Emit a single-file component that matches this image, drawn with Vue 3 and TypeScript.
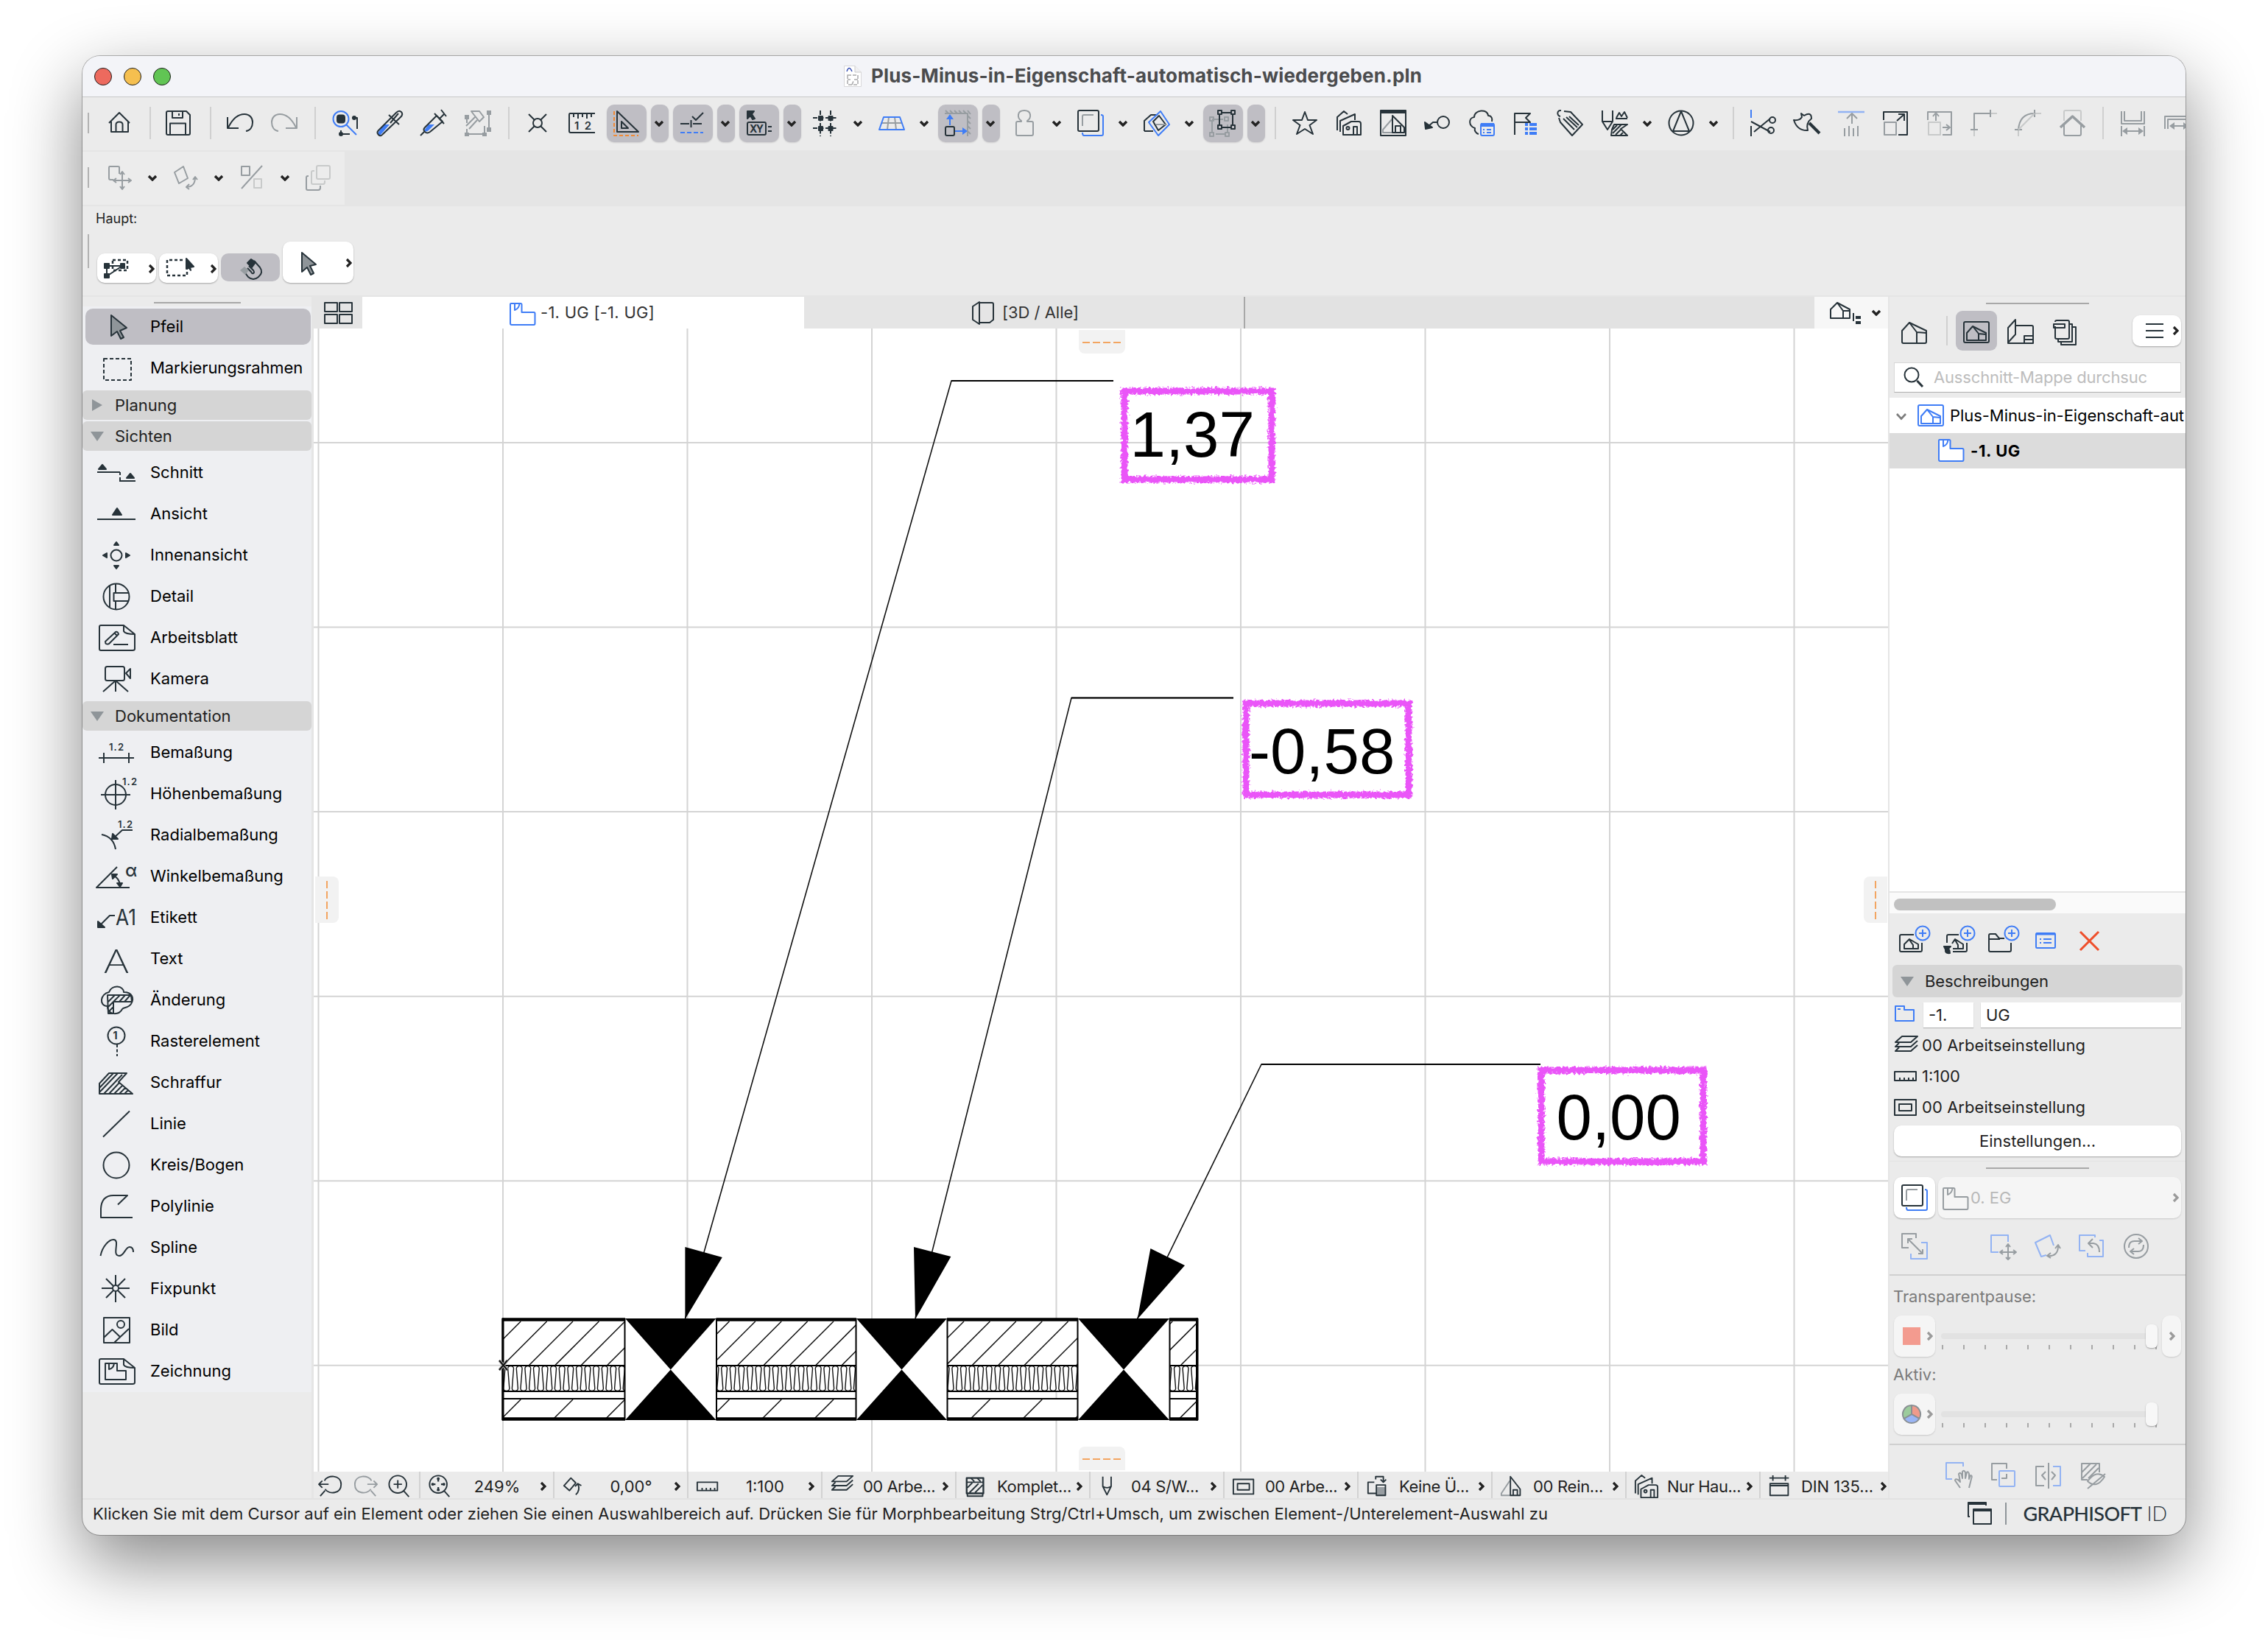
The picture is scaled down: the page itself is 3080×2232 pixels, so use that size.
<script setup lang="ts">
interface Tool { k: 'icon' | 'drop' | 'sep'; n?: string; on?: boolean; w?: number; x?: number; c?: string }

const vFit = {
  mounted(el: HTMLElement, b: { value: number }) {
    const w = el.getBoundingClientRect().width
    const n = (el.textContent || '').length
    if (b.value && n > 1) el.style.letterSpacing = `${(b.value - w) / n}px`
  },
}

const house = '<path d="M1 32V17L11 6 34 17V32Q34 34 32 34H3Q1 34 1 32Z"/><path d="M11 6 21 19V34M21 19 34 20"/>'
const houseIn = '<path d="M5 29V19L13 10 31 19V29Z"/><path d="M13 10 21 20V29M21 20 31 21"/>'
const storey = '<path d="M2 5H15Q16.500 5 16.500 6.500V17H33Q34.500 17 34.500 18.500V32Q34.500 34 33 34H3Q1 34 1 32V6Q1 5 2 5Z"/><path d="M7 5V14Q13 12 13.500 5"/>'
const plus = '<circle class="b" cx="32" cy="9" r="9.500"/><path class="b" d="M32 4V14M27 9H37"/>'
const layers = '<path d="M3 11 12 3H33L24 11ZM8 12 3 17H24L33 9M8 18 3 23H24L33 15"/>'

const icons: Record<string, string> = {
  home: '<path d="M4 18 18 4 32 18M7 16V30H30V16M13.500 30V20Q13.500 16.500 18 16.500T22.500 20V30"/>',
  save: '<path d="M4 2H29L34 7V32Q34 34 32 34H4Q2 34 2 32V4Q2 2 4 2ZM10 2V11H24V2M19 5V8M7 34V18.500H28V34"/>',
  undo: '<path d="M1 10V25H16M2 24C8 12 16 6 24 6C31 6 35 11 35 17C35 23 32 28 26 29"/>',
  redo: '<path class="g" d="M35 10V25H20M34 24C28 12 20 6 12 6C5 6 1 11 1 17C1 23 4 28 10 29"/>',
  find: '<circle class="b" cx="12" cy="12.500" r="10.500"/><path class="b" d="M19 20 33 34"/><rect class="f" x="7" y="7.500" width="10" height="10" rx="3"/><path d="M27 11H34V26M24 33H12V28"/><circle class="f" cx="30" cy="11" r="2"/><circle class="f" cx="12" cy="33" r="2"/>',
  dropper: '<path class="bf" d="M10 20H18L6 34Q3 35 2 32Z"/><path d="M3 28 27 4Q31 0 34 3T33 10L9 33Q6 37 3 34T3 28ZM17 7 31 20M19 18 30 5"/>',
  syringe: '<path class="bf" d="M11 20H19L11 28Q7 31 5 28Z"/><path d="M0 35 5 30M6 24 22 8 30 16 13 30Q9 33 6 30T6 24ZM19 5 32 19M26 12 33 5M28 0 35 9"/>',
  pickel: '<path class="g" d="M33 4V28M3 10V18M3 26V33H27V22M2 22 14 10M6 26 17 14M9 2H20L26 10 20 16 12 6Z"/><path class="gf" d="M30 1h6v6h-6zM30 24h6v6h-6zM0 7h6v6h-6zM0 31h6v5h-6zM24 31h6v5h-6z"/>',
  xcirc: '<circle cx="18" cy="18" r="6"/><path d="M6 6 14 14M30 6 22 14M6 30 14 22M30 30 22 22"/>',
  ruler: '<path d="M36 5H2Q1 5 1 7V29Q1 31 3 31H36M7 5V10M13 5V12M19 5V10M25 5V12M31 5V10"/><text x="8" y="27" font-size="15" font-weight="600" textLength="23">12</text>',
  tri: '<path d="M5 2V30H34ZM11 16V25H20Z"/><path class="o" stroke-dasharray="5 3" d="M1 2V35H34"/>',
  guide: '<path d="M1 19H13M18 19H30M15.500 14V24M17 9 22 14 32 4"/><path class="b" stroke-dasharray="6 3" d="M1 31H32"/>',
  xy: '<path class="f" d="M2 2H11L8 6 12 12 9 13 6 8 2 12Z"/><rect x="2" y="17" width="25" height="17" rx="2"/><path d="M30 23H35M30 29H35"/><text x="5" y="31" font-size="14" font-weight="700" textLength="19">XY</text>',
  grid: '<path stroke-dasharray="6 2.500" d="M1 11H35M1 25H35M11 1V36M25 1V36"/><path class="f" d="M9 9h5v5H9zM22.500 9h5v5h-5zM9 23h5v5H9zM22.500 23h5v5h-5z"/>',
  plane: '<path class="g" d="M14 10 12 27M22 10 24 27M4 18H32"/><path class="b" d="M7 10H29L35 27H1Z"/>',
  snap: '<path class="g" d="M0 5H31V36M1 1 5 5M7 1 11 5M13 1 17 5M19 1 23 5M25 1 29 5M31 1 35 6M31 8 35 12M31 15 35 19M31 22 35 26M31 29 35 33"/><rect x="1" y="23" width="12" height="12" rx="2"/><path class="b" d="M7 21V12M14 29H24"/><path class="bf" d="M2 13 7 6 12 13ZM24 24 31 29 24 34Z"/>',
  weight: '<path class="g" d="M14 15C8 11 8 1 18 1S28 11 22 15V16H28Q30 16 30 18V33Q30 35 28 35H9Q7 35 7 33V18Q7 16 9 16H14Z"/>',
  trace: '<path class="b" d="M32 7Q35 7 35 9V33Q35 35 33 35H9Q7 35 7 31"/><rect x="1" y="1" width="28" height="28" rx="2"/><path class="g" d="M22 7H9Q7 7 7 9V22"/>',
  cutplane: '<path d="M1 29V15L10 7H19M1 29H13"/><path class="b" d="M23 2 35 20 20 35 7 17Z"/><path d="M21 8 30 20 20 28 13 16Z"/><path class="g" d="M17 20H30"/>',
  group: '<path class="g" d="M3 16V31M8 33H20M3 13H18M24 30V20M0 10h5v5H0zM0 31h5v5H0zM21 31h5v5h-5zM20 10h5v5h-5z"/><path d="M13 6V22M31 6V22M16 4H28M16 24H28M11 1h5v5h-5zM29 1h5v5h-5zM11 21h5v5h-5zM29 21h5v5h-5z"/>',
  star: '<path d="M18 3 22 14H34L24.500 21 29 33 18 26 7 33 11.500 21 2 14H14Z"/>',
  houses: '<path d="M2 28V10L11 2 16 6M6 30V15L26 6V14M10 33V22L21 16H31Q34 16 34 19V34H10ZM24 34V23H29V34"/><circle cx="16.500" cy="25" r="2"/>',
  housewin: '<rect x="1" y="2" width="34" height="33"/><path class="f" d="M1 1H35V4H1z"/><path class="g" d="M17 12 4 27V31H17"/><path d="M17 31V8L33 24V31ZM21 31V22H28V31"/>',
  label: '<circle cx="26" cy="17" r="8"/><path d="M18 17H12L5 23"/><path class="f" d="M1 17 11 24 2 26Z"/>',
  cloud: '<path d="M14 33C10 32 8 28 9 25C0 22 0 11 8 10C8 0 26-2 27 8C32 8 33 13 32 16"/><rect class="b" x="17" y="19" width="18" height="16" rx="2"/><path class="bf" d="M17 18H35V23H17z"/><path class="b" d="M20 27H22M25 27H31M20 31H22M25 31H31"/>',
  flag: '<path d="M3 34V5H24L18 11 24 17H3"/><path class="bf" d="M17 18h4v4h-4zM23 18h10v4H23zM17 24h4v4h-4zM23 24h10v4H23zM17 30h4v4h-4zM23 30h10v4H23z"/>',
  tag: '<path d="M3 11 5 17 21 35 35 20 19 3 10 2M6 1C0 0 0 8 5 9M9 12 24 27M13 10 28 24M17 9 30 21"/>',
  pen: '<path d="M1 1V16L8 27 15 16V1M1 16H15M19 12H35M20 11 24 4 27 9 31 3 35 11M17 20H35L26 26 35 35H13L14 27Z"/><path d="M15 32 27 20M19 34 26 27M25 35 29 31M15 27 21 21"/>',
  north: '<circle cx="18" cy="18" r="16.500"/><path d="M18 2 7 29H29Z"/>',
  scissors: '<path class="b" d="M2 0V11"/><path d="M2 22V36M2 16 28 30M6 30 28 12"/><circle cx="31" cy="14" r="4"/><circle cx="29" cy="28" r="4"/>',
  axe: '<path d="M10 5 14 8Q24 2 24 12Q16 18 19 28Q5 29 0 14Q8 15 11 10Z"/><path stroke-width="4" d="M21 18 35 32"/>',
  extend: '<path class="lb" stroke-width="2.500" d="M0 3H36"/><path class="g" d="M19 19V6M12 12 19 5 26 12M9 25V36M15 22V36M21 25V36M27 22V36"/>',
  resize: '<path d="M2 14V3H34V34H22M20 15 29 7M22 6H30V15"/><path class="g" d="M3 17H19V34H3Z"/>',
  stretch: '<path class="g" d="M2 14V3H34V34H22M13 15V6M9 9 13 4 17 9M22 24H31M27 20 32 24 27 28"/><path class="lg" d="M3 17H19V34H3Z"/>',
  corner: '<path class="g" d="M5 27V5H27M0 27H10M27 0V10"/><path class="lg" d="M5 28V36M28 5H36"/>',
  fillet: '<path class="g" d="M5 27C6 14 12 5 27 5M0 27H10M27 0V10"/><path class="lg" d="M5 28V36M28 5H36M5 27 27 5"/>',
  ghouse: '<path class="lg" d="M7 15V3Q7 1 9 1H28Q30 1 30 3V15"/><path class="g" stroke-width="3.500" d="M2 24 18.500 9 35 24"/><path class="g" d="M7 20V33Q7 35 9 35H28Q30 35 30 33V20"/>',
  dim: '<path class="g" d="M3 2V19H34V2M7 2V15H30V2M3 22V36M34 22V36M6 29H31"/><path class="gf" d="M4 29 11 24V34ZM33 29 26 24V34Z"/>',
  dim2: '<path class="g" d="M2 26V9H36M6 26V13H36M9 22H36"/><path class="gf" d="M8 22 15 17V27ZM34 22 27 17V27Z"/>',
  move: '<path class="g" d="M17 13V4Q17 3 15 3H4Q3 3 3 5V19Q3 21 5 21H9M21 11V33M10 22H32M18 14 21 10 24 14M18 30 21 34 24 30M13 19 9 22 13 25M29 19 33 22 29 25"/>',
  rotate: '<path class="g" d="M2 11 14 3 20 19 8 26ZM18 31C25 31 30 27 30 18M27 21 30 17 33 21M22 27 18 31 22 34"/>',
  percent: '<path class="g" d="M3 3H14V15H3ZM31 2 3 33"/><path class="lg" d="M20 20H30V32H20Z"/>',
  stack: '<path class="g" d="M4 16H3Q1 16 1 18V33Q1 35 3 35H17Q20 35 20 32V29"/><path class="lg" d="M12 9H10Q8 9 8 11V25Q8 27 10 27H24Q26 27 26 24V22"/><rect class="lg" x="15" y="2" width="18" height="18" rx="2"/>',
  selA: '<rect x="11" y="6" width="20" height="14" stroke-dasharray="4 3" stroke-width="2.500"/><path d="M3 14V28L24 14Z"/><path class="f" d="M0 11h6v6H0zM22 11h5v6h-5zM0 25h6v5H0z"/>',
  selB: '<path stroke-dasharray="4 3" stroke-width="2.500" d="M22 6H1V27H28V18"/><path class="f" d="M27 4 37 15 32 16 33 20 30 16 27 18Z"/>',
  magnet: '<path d="M7 21 13 29Q20 35 27 29T29 16L21 7M14 14 20 20Q22 23 20 24T17 22L12 17"/><path class="f" d="M12 10 17 5 23 9 18 16Z"/><path class="gf" d="M2 20 8 15 14 20 9 26Z"/>',
  arrow: '<path fill="#8f9599" d="M10 4V30L17 24 22 34 26 32 21 22 29 20Z"/>',
  quads: '<path d="M1 4H18V16H1ZM21 4H38V16H21ZM1 20H18V32H1ZM21 20H38V32H21Z"/>',
  storey, house,
  storeyB: `<g class="b">${storey}</g>`,
  storeyG: `<g class="g">${storey}</g>`,
  cube: '<path d="M4 9 13 3V33L4 27ZM13 4H30Q32 4 32 6V27L27 31H13"/>',
  viewmap: '<g transform="translate(0 -4)"><path d="M1 27V15L10 6 27 15V27Z"/><path d="M10 6 18 17V27M18 17 27 17"/></g><path d="M32 16V27"/><path stroke-width="4" d="M35 22H42M35 29H42"/>',
  housebox: `<rect x="1" y="4" width="34" height="28" rx="2"/>${houseIn}`,
  houseboxB: `<g class="b"><rect x="1" y="4" width="34" height="28" rx="2"/>${houseIn}</g>`,
  layout: '<path d="M1 29V13L11 2V22L1 33ZM11 10H33Q35 10 35 12V34H1V29M35 24H23V34M23 29H35"/>',
  publish: '<path d="M3 11V26Q3 28 5 28H20Q22 28 22 26V5Q22 3 20 3H5Q3 3 3 5M1 8H16V13H1ZM7 28V32H26V8H22M11 32V36H31V12H26"/>',
  lens: '<circle cx="13" cy="14" r="9.500"/><path stroke-width="3" d="M20.500 22 28 30"/>',
  addHouse: `<path d="M20 11H3Q1 11 1 13V32Q1 34 3 34H29Q31 34 31 32V22"/><path d="M7 30V24L14 17 26 24V30ZM14 18 19 25V30"/>${plus}`,
  addLink: `<path d="M20 11H6Q4 11 4 13V22M12 34H29Q31 34 31 32V22"/><path d="M11 23 15 17 26 24V30H12M15 18 19 25V30"/><path class="f" d="M0 27H9L6 30Q8 32 8 36Q1 37 2 31Z"/>${plus}`,
  addFolder: `<path d="M31 22V32Q31 34 29 34H3Q1 34 1 32V12Q1 10 3 10H10L15 16H22M1 17H16"/>${plus}`,
  list: '<rect class="b" x="4" y="9" width="26" height="20" rx="1.500"/><path class="b" stroke-width="3" d="M4 10H30"/><path class="b" d="M9 17H11M14 17H25M9 22H11M14 22H25"/>',
  cross: '<path class="r" stroke-width="3" d="M4 7 29 32M29 7 4 32"/>',
  lay: layers,
  scale: '<rect x="2" y="12" width="29" height="12"/><path d="M9 24V20M15 24V20M21 24V20M27 24V20"/>',
  frame: '<rect x="2" y="8" width="29" height="21"/><rect x="8" y="14" width="17" height="9"/>',
  folder: '<path class="b" d="M2 8H14V13H27V28H2ZM5 12H9"/>',
  swapT: '<path class="g" d="M20 7V1H1V20H10M10 9 28 27M9 14V8H15M29 22V28H23"/><path class="lb" d="M27 13H35V35H13V28"/>',
  moveT: '<path class="lb" d="M24 12V3H1V26H11"/><path class="g" d="M24 16V36M13 26H34M21 19 24 15 27 19M21 33 24 36 27 33M17 23 13 26 17 29M31 23 35 26 31 29"/>',
  rotT: '<path class="lb" d="M26 17 21 3 1 13 9 32 16 30"/><path class="g" d="M18 31C27 32 32 27 32 18M28 21 32 16 35 21M22 27 17 31 22 34"/>',
  backT: '<path class="lb" d="M22 6V3H1V24H9M28 10H33V32H12V27"/><path class="g" d="M13 14H20Q28 15 28 26M19 8 13 14 19 20"/>',
  cycle: '<circle class="g" cx="18" cy="18" r="16"/><path class="g" d="M8 20Q8 10 17 11H25M21 7 26 11 21 15M28 16Q28 26 19 25H11M15 21 10 25 15 29"/>',
  hand: '<path class="lb" d="M24 6V1H1V23H9"/><path class="g" d="M20 35 13 25Q13 22 17 24L20 27 18 16Q20 13 22 17L23 22V13Q25 10 27 14V22L29 14Q31 12 32 16V23L34 18Q37 18 35 23 L32 35"/>',
  two: '<path class="g" d="M22 9V2H2V24H9M22 16V22H15"/><rect class="lb" x="12" y="12" width="21" height="21" rx="1"/>',
  split: '<path class="g" d="M12 6H1V32H12M18 1V36M14 13 9 18 14 24"/><path class="g" d="M22 13 27 18 22 24"/><path class="lb" d="M24 6H34V32H24"/>',
  hatchOff: '<path class="g" d="M10 24H2V2H26V14M2 14 14 2M3 22 22 3M11 22 25 8M10 26Q22 10 33 20Q22 37 10 26ZM10 36 34 16"/>',
  zback: '<path d="M8 10C12 1 32 1 32 15S15 30 9 22M0 15H14M5 10 0 15 5 20M9 24 2 32"/>',
  zfwd: '<path class="g" d="M26 10C22 1 2 1 2 15S19 30 25 22M20 15H34M29 10 34 15 29 20M25 24 32 32"/>',
  zin: '<circle cx="14" cy="15" r="12.500"/><path d="M14 9V21M8 15H20M22 24 30 33"/>',
  zfit: '<circle cx="15" cy="15" r="12.500"/><path stroke-width="2.500" d="M15 5V11M15 19V25M5 15H11M19 15H25M13 7H17M13 23H17M7 13V17M23 13V17"/><path d="M23 24 31 33"/>',
  rot: '<path d="M3 17 13 6 20 13 11 24ZM20 30Q27 24 23 14M19 18 23 14 28 17"/>',
  wallhatch: '<path stroke-width="2.500" d="M4 6H28V28H4Z"/><path d="M4 12H28M5 28V32H27V28M5 20 12 13M8 27 21 14M16 27 27 16M10 6 15 11M19 6 24 11"/>',
  pen2: '<path d="M7 4V18L13 30 19 18V4M7 18Q13 22 19 18"/>',
  over: '<path d="M12 12H3V28H15M14 8V4H25V11M21 8 25 12 29 8"/><rect class="gf" x="16" y="19" width="12" height="12"/><path d="M15 16H28V31H15Z"/>',
  reno: '<path class="g" d="M14 10 2 28V31H15"/><path d="M15 31V4L29 22V31ZM19 31V23H25V31"/>',
  dimstd: '<path d="M2 6H30M7 2V10M25 2V10M3 14H29V31H3ZM3 17H29"/>',
  windows: '<path d="M4 22H2V3H26V7M2 5H26"/><path d="M9 12H33V32H9ZM9 14H33"/>',
}

const sep = (w: number, x: number): Tool => ({ k: 'sep', w, x })
const ic = (n: string): Tool => ({ k: 'icon', n })
const dr = (n: string, on = false): Tool => ({ k: 'drop', n, on })
const tools: Tool[] = [
  ic('home'), sep(20, 11), ic('save'), sep(24, 13), ic('undo'), ic('redo'), sep(23, 11),
  ic('find'), ic('dropper'), ic('syringe'), ic('pickel'), sep(21, 11), ic('xcirc'), ic('ruler'), sep(4, -9),
  dr('tri', true), dr('guide', true), dr('xy', true), dr('grid'), dr('plane'), dr('snap', true), dr('weight'), dr('trace'), dr('cutplane'), dr('group', true),
  sep(18, 7), ic('star'), ic('houses'), ic('housewin'), ic('label'), ic('cloud'), ic('flag'), ic('tag'), sep(4, -9),
  dr('pen'), dr('north'), sep(18, 7),
  ic('scissors'), ic('axe'), ic('extend'), ic('resize'), ic('stretch'), ic('corner'), ic('fillet'), ic('ghouse'), sep(22, 11), ic('dim'), ic('dim2'),
]

const sheet = '<path d="M7 3H38L53 15V35Q53 37 50 37H7Q5 37 5 35V5Q5 3 7 3ZM38 3V11Q40 15 53 15"/>'
const views = [
  { t: 'Schnitt', i: '<path class="f" d="M4 15 9 9 14 15ZM42 27 47 21 52 27Z"/><path d="M2 19H33M32 31H54"/><path stroke-dasharray="4 3" d="M33 19V31"/>' },
  { t: 'Ansicht', i: '<path class="f" d="M23 21 29 12 35 21Z"/><path d="M2 27H54"/>' },
  { t: 'Innenansicht', i: '<circle cx="28" cy="20" r="7.500"/><path class="f" d="M25 6 28 2 31 6ZM25 34 28 38 31 34ZM15 17 10 20 15 23ZM41 17 46 20 41 23Z"/>' },
  { t: 'Detail', i: '<circle cx="28" cy="20" r="17.500"/><path d="M19 5V35M27 3V15M27 26V37M45 15H24.500V26H45"/>' },
  { t: 'Arbeitsblatt', i: sheet + '<path d="M13 25 27 12Q30 11 31 15L18 28Q13 30 13 25ZM24 29H44M25 13 29 17"/>' },
  { t: 'Kamera', i: '<rect x="13" y="3" width="26" height="19" rx="2.500"/><path d="M41 12 47 6V19ZM10 37 27 22 44 37M27 22V37"/>' },
]
const docs = [
  { t: 'Bemaßung', i: '<text x="18" y="17" font-size="13" font-weight="600" textLength="20">1.2</text><path d="M4 27H52M11 20V34M45 20V34"/>' },
  { t: 'Höhenbemaßung', i: '<circle cx="27" cy="21" r="14"/><path d="M7 21H47M27 1V41"/><text x="36" y="8" font-size="13" font-weight="600" textLength="20">1.2</text>' },
  { t: 'Radialbemaßung', i: '<text x="30" y="10" font-size="13" font-weight="600" textLength="20">1.2</text><path d="M50 13H36L24 24M8 19Q24 22 27 39"/><path class="f" d="M23 18 30 25 22 25Z"/>' },
  { t: 'Winkelbemaßung', i: '<path d="M29 7 1 35H46M24 19Q32 22 33 32"/><path class="f" d="M22 17H29L23 23ZM29 29H36L33 34Z"/><text x="40" y="20" font-size="24" font-weight="500">α</text>' },
  { t: 'Etikett', i: '<path d="M6 30 19 17H26"/><path class="f" d="M3 25 12 33H3Z"/><text x="27" y="30" font-size="30" font-weight="400" textLength="28" lengthAdjust="spacingAndGlyphs">A1</text>' },
  { t: 'Text', i: '<text x="11" y="38.500" font-size="46" class="thin" textLength="34" lengthAdjust="spacingAndGlyphs">A</text>' },
  { t: 'Änderung', i: '<path d="M16 28C4 28 6 11 18 9C22-2 38 0 38 9C49 9 53 17 48 25C44 31 38 29 36 32C32 40 18 41 16 30Z"/><path d="M16 13H48L49 22H24V38H17ZM17 22 26 13M17 29 33 13M17 36 24 29M32 22 40 13M39 22 47 13"/>' },
  { t: 'Rasterelement', i: '<circle cx="28" cy="12" r="11.500"/><text x="23.500" y="17" font-size="14" font-weight="700">1</text><path stroke-dasharray="4 2.500" d="M29 24V40"/>' },
  { t: 'Schraffur', i: '<path d="M5 21 18 7H42L31 19 50 35H5ZM5 27 24 7M5 33 30 7M11 35 36 9M18 35 32 20M25 35 36 24M32 35 40 27M39 35 44 30"/>' },
  { t: 'Linie', i: '<path d="M10 37.500 46 2.500"/>' },
  { t: 'Kreis/Bogen', i: '<circle cx="28" cy="20" r="17.500"/>' },
  { t: 'Polylinie', i: '<path d="M50 35H7V23Q8 5 24 5H43L30 17.500"/>' },
  { t: 'Spline', i: '<path d="M6.500 31C9 18 18 9 24 9C34 9 21 31 32 31C39 31 40 19 46 19C50 19 51 22 51 26"/>' },
  { t: 'Fixpunkt', i: '<circle cx="27" cy="19" r="4"/><path d="M8 19H23M31 19H46M27 1V15M27 23V38M14 6 24 16M30 22 40 32M40 6 30 16M24 22 14 32"/>' },
  { t: 'Bild', i: '<rect x="11" y="3" width="35" height="34"/><circle cx="34" cy="12" r="5"/><path d="M11 30 22.500 19 33 29M25 37 45 18"/>' },
  { t: 'Zeichnung', i: sheet + '<path d="M13 9H29V19H41V31H13ZM18 9V17Q24 16 25 9"/>' },
]

const vlines = Array.from({ length: 9 }, (_, i) => 432.5 + i * 250.5 - 426)
const hlines = Array.from({ length: 6 }, (_, i) => 601 + i * 250.55 - 446)

const segs = [[682, 849], [972.5, 1163], [1286, 1464], [1588, 1627]]
const cols = [[849, 972.5], [1163, 1286], [1464, 1588]]
const hatchTop = Array.from({ length: 30 }, (_, i) => 707.2 - 35.4 + i * 35.4)
const hatchBot = Array.from({ length: 16 }, (_, i) => 707.2 + i * 70.8)
const p = 11.6
const coil = Array.from({ length: 84 }, (_, k) => {
  const x = 682 + k * p
  return `M${x - 1.800} 1885L${x - 3.900} 1858A3.900 3.500 0 0 1 ${x + 3.900} 1858L${x + 1.800} 1885A4 3.500 0 0 0 ${x + p - 1.800} 1885`
}).join('')

const notes = [
  { t: '1,37', x: 1534.5, y: 620, b: [1527, 531, 200, 120] },
  { t: '-0,58', x: 1696, y: 1050, b: [1692, 955, 221, 124] },
  { t: '0,00', x: 2113.5, y: 1547, b: [2093, 1453, 220, 124] },
]

const opts = [
  { i: 'zfit', t: '249%', c: true }, { i: 'rot', t: '0,00°', c: true }, { i: 'scale', t: '1:100', c: true },
  { i: 'lay', t: '00 Arbe...' }, { i: 'wallhatch', t: 'Komplet...' }, { i: 'pen2', t: '04 S/W...' }, { i: 'frame', t: '00 Arbe...' },
  { i: 'over', t: 'Keine Ü...' }, { i: 'reno', t: '00 Rein...' }, { i: 'houses', t: 'Nur Hau...' }, { i: 'dimstd', t: 'DIN 135...' },
]
const optW: Record<string, number> = { '00 Arbe...': 98, 'Komplet...': 101, '04 S/W...': 92, 'Keine Ü...': 95, '00 Rein...': 95, 'Nur Hau...': 100, 'DIN 135...': 98 }
</script>

<template>
  <div class="desk">
    <div class="win">
      <header class="title">
        <div class="lights"><i class="red" /><i class="yel" /><i class="grn" /></div>
        <svg class="doc" viewBox="0 0 24 29"><path d="M.5.500H15L23.500 9V28.500H.5Z" fill="#fff" stroke="#d8d8da" /><path d="M15 .5V9H23.500" fill="#f0f0f2" stroke="#ccc" /><path d="M4 8Q7-1 11 8" fill="none" stroke="#3b52b5" stroke-width="1.500" /><path d="M5 13H19V26H5ZM5 19H9M14 19H19M11 26 13 21" fill="none" stroke="#a9a9ab" stroke-width="1.500" stroke-dasharray="5 2" /></svg>
        <span class="name"><b v-fit="748">Plus-Minus-in-Eigenschaft-automatisch-wiedergeben.pln</b></span>
      </header>

      <div class="bar">
        <span class="grip" />
        <template v-for="(t, i) in tools" :key="i">
          <span v-if="t.k === 'sep'" class="sep" :style="{ width: t.w + 'px' }"><i v-if="t.x! > 0" :style="{ marginLeft: t.x + 'px' }" /></span>
          <span v-else-if="t.k === 'icon'" class="cell"><svg class="ico" viewBox="0 0 36 36" v-html="icons[t.n!]" /></span>
          <span v-else class="pair" :class="{ on: t.on }">
            <span class="main"><svg class="ico" viewBox="0 0 36 36" v-html="icons[t.n!]" /></span>
            <span class="arr"><svg class="chd" viewBox="0 0 14 9"><path d="M2 2 7 7 12 2" /></svg></span>
          </span>
        </template>
      </div>

      <div class="bar2">
        <div class="b2in">
          <span class="grip" />
          <span v-for="n in ['move', 'rotate', 'percent']" :key="n" class="pair">
            <span class="main"><svg class="ico" viewBox="0 0 36 36" v-html="icons[n]" /></span>
            <span class="arr"><svg class="chd" viewBox="0 0 14 9"><path d="M2 2 7 7 12 2" /></svg></span>
          </span>
          <span class="pair"><span class="main"><svg class="ico" viewBox="0 0 36 36" v-html="icons.stack" /></span></span>
        </div>
      </div>

      <div class="info">
        <div class="haupt">Haupt:</div>
        <div class="ibtns">
          <span class="grip tall" />
          <span class="ib"><svg class="ico" viewBox="0 0 36 36" v-html="icons.selA" /><svg class="chr" viewBox="0 0 9 14"><path d="M2 2 7 7 2 12" /></svg></span>
          <span class="ib"><svg class="ico" viewBox="0 0 36 36" v-html="icons.selB" /><svg class="chr" viewBox="0 0 9 14"><path d="M2 2 7 7 2 12" /></svg></span>
          <span class="ib sel"><svg class="ico" viewBox="0 0 36 36" v-html="icons.magnet" /></span>
          <span class="ib big"><svg class="ico" viewBox="0 0 36 36" v-html="icons.arrow" /><svg class="chr" viewBox="0 0 9 14"><path d="M2 2 7 7 2 12" /></svg></span>
        </div>
      </div>

      <div class="body">
        <aside class="left">
          <div class="lgrip"><i /></div>
          <div class="tools">
            <div class="tool act"><svg class="tic ico" viewBox="0 0 56 40"><path fill="#8f9599" d="M21 4V32L29 26 34 36 38 34 33 25 42 21Z" /></svg><span>Pfeil</span></div>
            <div class="tool"><svg class="tic ico" viewBox="0 0 56 40"><rect x="11" y="7" width="37" height="29" stroke-dasharray="5 3" /></svg><span v-fit="207">Markierungsrahmen</span></div>
            <div class="head first"><svg class="tr" viewBox="0 0 18 18"><path d="M2 1 16 9 2 17Z" /></svg>Planung</div>
            <div class="head"><svg class="tr" viewBox="0 0 18 18"><path d="M0 3H18L9 16Z" /></svg>Sichten</div>
            <div v-for="t in views" :key="t.t" class="tool"><svg class="tic ico" viewBox="0 0 56 40" v-html="t.i" /><span>{{ t.t }}</span></div>
            <div class="head"><svg class="tr" viewBox="0 0 18 18"><path d="M0 3H18L9 16Z" /></svg>Dokumentation</div>
            <div v-for="t in docs" :key="t.t" class="tool"><svg class="tic ico" viewBox="0 0 56 40" v-html="t.i" /><span>{{ t.t }}</span></div>
          </div>
        </aside>

        <main class="mid">
          <div class="tabs">
            <span class="t0"><svg class="ico q" viewBox="0 0 39 36" v-html="icons.quads" /></span>
            <span class="t1"><svg class="ico" viewBox="0 0 36 36" v-html="icons.storeyB" /><span v-fit="155" class="tt">-1. UG [-1. UG]</span></span>
            <span class="t2"><svg class="ico" viewBox="0 0 36 36" v-html="icons.cube" /><span v-fit="104" class="tt">[3D / Alle]</span></span>
            <span class="t3" />
            <span class="t4"><svg class="ico vm" viewBox="0 0 44 36" v-html="icons.viewmap" /><svg class="chd" viewBox="0 0 14 9"><path d="M2 2 7 7 12 2" /></svg></span>
          </div>
          <div class="canvas">
            <svg class="plan" viewBox="426 446 2138 1552">
              <defs>
                <filter id="rough" x="-5%" y="-8%" width="110%" height="116%"><feTurbulence type="fractalNoise" baseFrequency=".3" numOctaves="2" seed="4" /><feDisplacementMap in="SourceGraphic" scale="8" xChannelSelector="R" yChannelSelector="G" /></filter>
                <clipPath id="cTop"><rect v-for="s in segs" :key="s[0]" :x="s[0]" y="1790" :width="s[1] - s[0]" height="64" /></clipPath>
                <clipPath id="cMid"><rect v-for="s in segs" :key="s[0]" :x="s[0]" y="1854" :width="s[1] - s[0]" height="35" /></clipPath>
                <clipPath id="cBot"><rect v-for="s in segs" :key="s[0]" :x="s[0]" y="1899" :width="s[1] - s[0]" height="27" /></clipPath>
              </defs>
              <g stroke="#d4d4d4" stroke-width="2">
                <path v-for="x in vlines" :key="x" :d="`M${x + 426} 446V1998`" />
                <path v-for="y in hlines" :key="y" :d="`M426 ${y + 446}H2564`" />
              </g>
              <g fill="#fff">
                <rect v-for="s in segs" :key="s[0]" :x="s[0]" y="1790" :width="s[1] - s[0]" height="99" />
                <rect v-for="s in segs" :key="s[1]" :x="s[0]" y="1899" :width="s[1] - s[0]" height="29" />
                <rect v-for="c in cols" :key="c[0]" :x="c[0]" y="1791" :width="c[1] - c[0]" height="136" />
              </g>
              <g stroke="#111" stroke-width="1.500" fill="none">
                <g clip-path="url(#cTop)"><path v-for="x in hatchTop" :key="x" :d="`M${x} 1794L${x - 60} 1854`" /></g>
                <g clip-path="url(#cMid)"><path :d="coil" stroke-width="1.400" /></g>
                <g clip-path="url(#cBot)"><path v-for="x in hatchBot" :key="x" :d="`M${x} 1900L${x - 28} 1928`" /></g>
              </g>
              <g stroke="#000" fill="none">
                <template v-for="s in segs" :key="s[0]">
                  <path stroke-width="2" :d="`M${s[0]} 1854H${s[1]}M${s[0]} 1889H${s[1]}M${s[0]} 1899H${s[1]}M${s[0] + .5} 1790V1928M${s[1] - .5} 1790V1928`" />
                  <path stroke-width="4.500" :d="`M${s[0]} 1791.500H${s[1]}M${s[0]} 1926.500H${s[1]}`" />
                </template>
                <path stroke-width="3" d="M683 1789.500V1928.500M1625.500 1789.500V1928.500" />
              </g>
              <path v-for="c in cols" :key="c[0]" :d="`M${c[0]} 1790H${c[1]}L${(c[0] + c[1]) / 2} 1859.500ZM${c[0]} 1928H${c[1]}L${(c[0] + c[1]) / 2} 1859.500Z`" />
              <path d="M678 1847 689 1860M689 1847 678 1860" stroke="#bbb" stroke-width="4" />
              <path d="M678 1847 689 1860M689 1847 678 1860" stroke="#111" stroke-width="2" />
              <g fill="none" stroke="#111" stroke-width="1.600">
                <path d="M1512 517H1292L930.500 1790M1675 947.500H1455L1243 1790M2092 1445H1713L1544.600 1790" />
              </g>
              <g fill="none" stroke="#000" stroke-width="2"><path d="M1512 517H1292M1675 947.500H1455M2092 1445H1713" /></g>
              <path d="M930.400 1693 980.800 1707 930.400 1791ZM1241 1693 1291.400 1706 1243 1791ZM1562.400 1695 1609 1718 1544.600 1791Z" />
              <template v-for="n in notes" :key="n.t">
                <rect :x="n.b[0]" :y="n.b[1]" :width="n.b[2]" :height="n.b[3]" fill="none" stroke="#ea54f8" stroke-width="9" filter="url(#rough)" />
                <text :x="n.x" :y="n.y" font-size="87" font-family="Liberation Sans, Arial, sans-serif">{{ n.t }}</text>
              </template>
            </svg>
            <i class="hd top" /><i class="hd bot" /><i class="hd lft" /><i class="hd rgt" />
          </div>
          <div class="qopt">
            <span class="zooms"><svg v-for="n in ['zback', 'zfwd', 'zin']" :key="n" class="ico" viewBox="0 0 36 36" v-html="icons[n]" /></span>
            <span v-for="(o, i) in opts" :key="i" class="qo">
              <svg class="ico" viewBox="0 0 36 36" v-html="icons[o.i]" />
              <span class="qt" :class="{ c: o.c }"><span v-fit="optW[o.t] || 0">{{ o.t }}</span></span>
              <svg class="chr" viewBox="0 0 9 14"><path d="M2 2 7 7 2 12" /></svg>
            </span>
          </div>
        </main>

        <aside class="right">
          <div class="rgrip"><i /></div>
          <div class="nav">
            <span class="n1"><svg class="ico" viewBox="0 0 36 36" v-html="icons.house" /></span>
            <i class="nsep" />
            <span class="n2"><svg class="ico" viewBox="0 0 36 36" v-html="icons.housebox" /></span>
            <svg class="ico n3" viewBox="0 0 36 36" v-html="icons.layout" />
            <svg class="ico n4" viewBox="0 0 36 36" v-html="icons.publish" />
            <span class="menu"><svg class="ico" viewBox="0 0 36 36"><path d="M6 9H30M6 18H30M6 27H30" /></svg><svg class="chr" viewBox="0 0 9 14"><path d="M2 2 7 7 2 12" /></svg></span>
          </div>
          <div class="search"><svg class="ico" viewBox="0 0 36 36" v-html="icons.lens" /><span class="ph"><span v-fit="290">Ausschnitt-Mappe durchsuc</span></span></div>
          <div class="tree">
            <div class="row"><svg class="tch" viewBox="0 0 16 11"><path d="M2 2 8 8.500 14 2" /></svg><svg class="ico" viewBox="0 0 36 36" v-html="icons.houseboxB" /><span v-fit="318">Plus-Minus-in-Eigenschaft-aut</span></div>
            <div class="row sel"><svg class="ico" viewBox="0 0 36 36" v-html="icons.storeyB.replace('<path', '<path fill=\'#fff\'')" /><b v-fit="68">-1. UG</b></div>
          </div>
          <div class="hs"><i /></div>
          <div class="acts">
            <svg v-for="n in ['addHouse', 'addLink', 'addFolder', 'list', 'cross']" :key="n" class="ico" viewBox="0 0 36 36" v-html="icons[n]" />
          </div>
          <div class="head desc"><svg class="tr" viewBox="0 0 18 18"><path d="M0 3H18L9 16Z" /></svg><span v-fit="168">Beschreibungen</span></div>
          <div class="ug"><svg class="ico" viewBox="0 0 36 36" v-html="icons.folder" /><span class="f1">-1.</span><span class="f2">UG</span></div>
          <div class="set"><svg class="ico" viewBox="0 0 36 30" v-html="icons.lay" /><span v-fit="222">00 Arbeitseinstellung</span></div>
          <div class="set"><svg class="ico" viewBox="0 0 36 36" v-html="icons.scale" />1:100</div>
          <div class="set"><svg class="ico" viewBox="0 0 36 36" v-html="icons.frame" /><span v-fit="222">00 Arbeitseinstellung</span></div>
          <div class="ebtn"><span v-fit="158">Einstellungen...</span></div>
          <div class="rgrip2"><i /></div>
          <div class="ref">
            <span class="rb"><svg class="ico" viewBox="0 0 36 36" v-html="icons.trace" /></span>
            <span class="cb"><svg class="ico" viewBox="0 0 36 36" v-html="icons.storeyG" /><span>0. EG</span><svg class="chr dim" viewBox="0 0 9 14"><path d="M2 2 7 7 2 12" /></svg></span>
          </div>
          <div class="refi">
            <svg class="ico" viewBox="0 0 36 36" v-html="icons.swapT" /><svg v-for="n in ['moveT', 'rotT', 'backT', 'cycle']" :key="n" class="ico" viewBox="0 0 36 36" v-html="icons[n]" />
          </div>
          <div class="tp">
            <div class="lb2"><span v-fit="194">Transparentpause:</span></div>
            <div class="sl">
              <span class="sb"><i class="sw" /><svg class="chr dim" viewBox="0 0 9 14"><path d="M2 2 7 7 2 12" /></svg></span>
              <span class="track"><span class="ticks"><i v-for="k in 11" :key="k" /></span><i class="thumb" /></span>
              <span class="sb sm"><svg class="chr dim" viewBox="0 0 9 14"><path d="M2 2 7 7 2 12" /></svg></span>
            </div>
            <div class="lb2 ak">Aktiv:</div>
            <div class="sl">
              <span class="sb"><svg class="pie" viewBox="0 0 28 28"><g stroke="#8a9094" stroke-width="2"><path fill="#ef9a8b" d="M14 14V2A12 12 0 0 1 24.400 20Z" /><path fill="#9ab5f5" d="M14 14 24.400 20A12 12 0 0 1 3.600 20Z" /><path fill="#9ccb9c" d="M14 14 3.600 20A12 12 0 0 1 14 2Z" /></g></svg><svg class="chr dim" viewBox="0 0 9 14"><path d="M2 2 7 7 2 12" /></svg></span>
              <span class="track"><span class="ticks"><i v-for="k in 11" :key="k" /></span><i class="thumb" /></span>
            </div>
          </div>
          <div class="lasti"><svg v-for="n in ['hand', 'two', 'split', 'hatchOff']" :key="n" class="ico" viewBox="0 0 36 36" v-html="icons[n]" /></div>
        </aside>
      </div>

      <footer class="status">
        <span v-fit="1976" class="msg">Klicken Sie mit dem Cursor auf ein Element oder ziehen Sie einen Auswahlbereich auf. Drücken Sie für Morphbearbeitung Strg/Ctrl+Umsch, um zwischen Element-/Unterelement-Auswahl zu</span>
        <svg class="ico" viewBox="0 0 36 36" v-html="icons.windows" /><i class="fsep" />
        <span class="gs"><span v-fit="161">GRAPHISOFT</span><em>ID</em></span>
      </footer>
    </div>
  </div>
</template>

<style>
html, body { margin: 0; background: #fff; }
.ico { width: 36px; height: 36px; flex: none; fill: none; stroke: #27333a; stroke-width: 2; overflow: visible; stroke-linejoin: round; }
.ico .b, .ico .b * { stroke: #3f7df6; }
.ico .lb { stroke: #93b3f3; }
.ico .bf { fill: #3f7df6; stroke: none; }
.ico .g, .ico .g * { stroke: #979da1; }
.ico .lg { stroke: #c8caca; }
.ico .gf { fill: #979da1; stroke: none; }
.ico .f { fill: #27333a; }
.ico .o { stroke: #f08a35; }
.ico .r { stroke: #ee4f2b; }
.ico text { fill: #27333a; stroke: none; font-family: Inter, "Open Sans", sans-serif; }
.ico text.thin { font-family: Lato, sans-serif; font-weight: 300; }
</style>

<style scoped>
.desk { width: 3080px; height: 2232px; box-sizing: border-box; padding: 76px 112px 148px; background: #fff; overflow: hidden; font: 22px/28px Inter, "Open Sans", sans-serif; color: #1f1f1f; }
.win { width: 2856px; height: 2008px; border-radius: 24px; overflow: hidden; display: flex; flex-direction: column; background: #ebebeb; box-shadow: 0 0 0 1px rgba(0,0,0,.28), 0 36px 96px rgba(0,0,0,.48); }
span, i, b { white-space: nowrap; }
i { display: block; font-style: normal; }
svg { display: block; flex: none; }
.chd { width: 14px; height: 9px; fill: none; stroke: #222; stroke-width: 3.400; }
.chr { width: 9px; height: 14px; fill: none; stroke: #222; stroke-width: 3.200; }
.chr.dim { stroke: #9a9a9a; }

.title { height: 56px; flex: none; background: #f3f4f8; border-bottom: 1px solid #c8c8c8; box-sizing: border-box; display: flex; align-items: center; }
.lights { display: flex; gap: 16px; margin-left: 16px; width: 1018px; }
.lights i { width: 22px; height: 22px; border-radius: 50%; border: 1px solid; }
.red { background: #ed6a5e; border-color: #d95246; }
.yel { background: #f5bf4f; border-color: #dfa63a; }
.grn { background: #61c554; border-color: #4fab41; }
.doc { width: 24px; height: 29px; }
.name { margin: 0 0 2px 13px; width: 760px; font-size: 26px; color: #4b4c4e; }
.name b { display: inline-block; font-weight: 700; }

.bar { height: 74px; flex: none; display: flex; align-items: center; box-sizing: border-box; padding-bottom: 2px; border-bottom: 2px solid #e5e5e5; }
.grip { width: 2px; height: 28px; background: #b2b2b2; margin: 0 11px 0 7px; flex: none; }
.sep { height: 44px; flex: none; display: flex; }
.sep i { width: 2px; height: 44px; background: #d0d0d0; }
.cell { width: 60px; flex: none; display: flex; justify-content: center; }
.pair { width: 90px; flex: none; display: flex; gap: 6px; }
.main { width: 54px; height: 51px; border-radius: 10px; display: flex; align-items: center; justify-content: center; }
.arr { width: 24px; height: 51px; border-radius: 9px; display: flex; align-items: center; justify-content: center; padding-right: 2px; box-sizing: border-box; }
.on .main, .on .arr { background: #bfbec4; box-shadow: 0 1px 2px rgba(0,0,0,.12); }

.bar2 { height: 74px; flex: none; background: #e5e5e5; }
.b2in { width: 356px; height: 72px; background: #ececec; display: flex; align-items: center; padding-bottom: 2px; box-sizing: border-box; }
.b2in .grip { margin-right: 15px; }
.info { height: 121px; flex: none; border-bottom: 2px solid #e5e5e5; display: flex; flex-direction: column; }
.haupt { margin: 3px 0 0 18px; font-size: 18px; line-height: 28px; }
.ibtns { display: flex; align-items: flex-end; gap: 4px; margin-top: 17px; height: 56px; }
.ibtns .grip { margin: 0 7px 20px 7px; height: 46px; }
.ib { width: 80px; height: 40px; border-radius: 10px; background: #fff; box-shadow: 0 1px 2px rgba(0,0,0,.3); display: flex; align-items: center; justify-content: space-between; padding: 2px 2px 0 10px; box-sizing: border-box; }
.ib.sel { background: #bfbec4; height: 38px; margin-bottom: 2px; justify-content: center; box-shadow: none; padding: 4px 0 0 4px; }
.ib.big { width: 96px; height: 56px; padding-left: 16px; }

.body { height: 1631px; flex: none; display: flex; background: #e5e5e5; }
.left { width: 311px; background: #ebebeb; margin-right: 3px; }
.lgrip { height: 13px; padding-top: 7px; box-sizing: border-box; }
.lgrip i { width: 118px; height: 2px; background: #a8a8a8; margin-left: 97px; }
.tools { background: #eeeff2; height: 1474px; }
.tool { height: 56px; display: flex; align-items: center; color: #000; }
.tool span { margin-bottom: 2px; }
.tic { width: 56px; height: 40px; margin: 0 18px 0 18px; }
.act { height: 49px; margin: 0 1px 0 4px; border-radius: 10px; background: #bfbec4; position: relative; top: 3px; margin-bottom: 7px; }
.act .tic { margin-left: 14px; }
.head { height: 40px; margin-bottom: 2px; border-radius: 6px; background: #d5d5d5; display: flex; align-items: center; color: #222; }
.head.first { margin-top: 2px; }
.tool + .head:not(.first) { margin-top: 2px; }
.tr { width: 18px; height: 18px; margin: 0 15px 0 11px; fill: #8f9599; }

.mid { width: 2138px; margin-right: 2px; display: flex; flex-direction: column; }
.tabs { height: 43px; display: flex; }
.tabs > span { display: flex; align-items: center; box-sizing: border-box; }
.tt { margin-bottom: 2px; }
.t0 { width: 66px; background: #e5e5e5; padding-left: 14px; }
.q { width: 39px; }
.t1 { width: 600px; background: #fff; padding-left: 200px; gap: 6px; color: #333; }
.t2 { width: 599px; background: #e5e5e5; border-right: 2px solid #a8a8a8; padding-left: 225px; gap: 8px; color: #333; }
.t3 { width: 773px; background: #e2e2e2; }
.t4 { width: 100px; background: #f7f7f7; padding-left: 21px; gap: 12px; }
.vm { width: 44px; margin-top: 4px; }
.canvas { height: 1552px; background: #fff; position: relative; }
.plan { width: 2138px; height: 1552px; }
.hd { position: absolute; background: #f2f2f2; }
.hd::after { content: ""; position: absolute; }
.top, .bot { width: 63px; height: 32px; left: 1039px; }
.top { top: 2px; border-radius: 0 0 8px 8px; }
.bot { bottom: 2px; border-radius: 8px 8px 0 0; }
.top::after, .bot::after { left: 5px; top: 16px; width: 52px; height: 2px; background: repeating-linear-gradient(90deg, #f3a561 0 10px, transparent 10px 14px); }
.lft, .rgt { width: 32px; height: 63px; top: 744px; }
.lft { left: 2px; border-radius: 0 8px 8px 0; }
.rgt { right: 1px; border-radius: 8px 0 0 8px; }
.lft::after, .rgt::after { left: 15px; top: 6px; width: 2px; height: 52px; background: repeating-linear-gradient(180deg, #f3a561 0 10px, transparent 10px 14px); }

.qopt { height: 36px; background: #ebebeb; display: flex; }
.zooms { width: 143px; display: flex; align-items: center; gap: 13px; padding: 4px 0 0 7px; box-sizing: border-box; height: 36px; }
.zooms .ico, .qo .ico { width: 34px; height: 34px; }
.qo { width: 182px; flex: none; border-left: 2px solid #d2d2d2; box-sizing: border-box; display: flex; align-items: center; padding-left: 10px; height: 36px; }
.qo:last-child { width: 175px; }
.qt { width: 98px; margin: 4px 5px 0 11px; display: flex; }
.qo .chr { margin-top: 4px; margin-left: 4px; }
.qo .ico { margin-top: 3px; }
.qt.c { justify-content: center; }

.right { width: 402px; background: #ebebeb; display: flex; flex-direction: column; overflow: hidden; }
.rgrip { height: 19px; padding: 8px 0 0 131px; box-sizing: border-box; flex: none; }
.rgrip i, .rgrip2 i { width: 140px; height: 2px; background: #a8a8a8; }
.nav { height: 54px; display: flex; align-items: center; flex: none; }
.n1 { margin: 2px 0 0 16px; }
.nsep { width: 2px; height: 40px; background: #d0d0d0; margin: 0 11px 0 25px; }
.n2 { width: 56px; height: 54px; border-radius: 9px; background: #bfbec4; display: flex; align-items: center; justify-content: center; padding-top: 4px; box-sizing: border-box; }
.n3 { margin: 2px 0 0 14px; }
.n4 { margin: 2px 0 0 26px; }
.menu { margin-left: 72px; width: 66px; height: 42px; border-radius: 10px; background: #fff; box-shadow: 0 1px 2px rgba(0,0,0,.3); display: flex; align-items: center; padding-left: 12px; box-sizing: border-box; gap: 6px; }
.search { margin: 16px 6px 7px; height: 41px; background: #fff; border: 1px solid #d8d8d8; border-bottom-color: #b0b0b0; box-sizing: border-box; display: flex; align-items: center; flex: none; color: #bdbdbd; padding-left: 10px; }
.ph { margin: 0 0 2px 7px; width: 290px; overflow: hidden; }
.tree { background: #fff; height: 672px; flex: none; border-bottom: 2px solid #e5e5e5; box-sizing: border-box; color: #000; }
.row { height: 48px; display: flex; align-items: center; }
.tch { width: 16px; height: 11px; margin: 2px 14px 0 8px; fill: none; stroke: #7d7d7d; stroke-width: 2.600; }
.row .ico { margin-right: 8px; }
.row.sel { background: #dcdcdc; padding-left: 66px; }
.row.sel .ico { margin-top: -4px; }
.hs { height: 28px; background: #fafafa; padding: 8px 0 0 6px; box-sizing: border-box; flex: none; }
.hs i { width: 220px; height: 16px; border-radius: 8px; background: #c1c1c1; }
.acts { height: 70px; display: flex; padding: 18px 0 0 13px; gap: 24.500px; box-sizing: border-box; flex: none; }
.desc { height: 44px; margin: 0 4px 0 4px; flex: none; }
.ug { height: 44px; padding: 4px 0 0 6px; box-sizing: border-box; display: flex; align-items: center; flex: none; }
.ug .ico { margin-top: -4px; }
.f1, .f2 { height: 34px; line-height: 34px; background: #fff; box-shadow: 0 1px 1px #b5b5b5; padding-left: 7px; box-sizing: border-box; }
.f1 { width: 68px; margin: 0 10px 0 4px; }
.f2 { width: 272px; }
.set { height: 42px; display: flex; align-items: center; gap: 3px; padding-left: 5px; flex: none; }
.ebtn { height: 42px; margin: 4px 6px 0; background: #fff; border-radius: 10px; box-shadow: 0 1px 2px rgba(0,0,0,.3); display: flex; align-items: center; justify-content: center; flex: none; }
.rgrip2 { margin-top: 6px; height: 22px; border-top: 1px solid #e3e3e3; padding: 8px 0 0 131px; box-sizing: border-box; flex: none; }
.ref { display: flex; gap: 4px; padding-left: 6px; flex: none; height: 56px; }
.rb { width: 56px; border-radius: 10px; background: #fff; box-shadow: 0 1px 2px rgba(0,0,0,.3); display: flex; align-items: center; justify-content: center; }
.cb { width: 330px; border-radius: 10px; background: #f5f5f5; box-shadow: 0 1px 2px rgba(0,0,0,.15); display: flex; align-items: center; padding: 0 3px 0 6px; box-sizing: border-box; color: #b8b8b8; gap: 2px; }
.cb .chr { margin-left: auto; }
.refi { height: 78px; display: flex; align-items: center; gap: 24px; padding-left: 16px; border-bottom: 2px solid #d0d0d0; box-sizing: border-box; flex: none; }
.refi .ico:first-child { margin-right: 61px; }
.tp { height: 230px; flex: none; border-bottom: 2px solid #d0d0d0; box-sizing: border-box; padding: 14px 0 0 6px; }
.lb2 { color: #7b7b7b; height: 28px; margin-left: -1px; }
.ak { margin-top: 10px; }
.sl { margin-top: 12px; height: 56px; display: flex; }
.sb { width: 56px; height: 56px; border-radius: 10px; background: #f5f5f5; box-shadow: 0 1px 2px rgba(0,0,0,.15); display: flex; align-items: center; justify-content: space-between; padding: 0 3px 0 12px; box-sizing: border-box; }
.sb.sm { width: 26px; padding: 0; justify-content: center; }
.sw { width: 24px; height: 24px; background: #f39b8f; }
.pie { width: 28px; height: 28px; margin-left: -2px; }
.track { width: 294px; height: 8px; margin: 24px 0 0 8px; border-radius: 4px; background: #e2e2e2; position: relative; margin-right: 6px; }
.ticks { display: flex; justify-content: space-between; position: absolute; left: 1px; top: 16px; width: 292px; }
.ticks i { width: 2px; height: 6px; background: #a9a9a9; }
.thumb { position: absolute; right: 0; top: -12px; width: 16px; height: 32px; border-radius: 6px; background: #f7f7f7; box-shadow: 0 1px 2px rgba(0,0,0,.3); }
.lasti { display: flex; gap: 25px; padding: 23px 0 0 76px; }

.status { height: 50px; flex: none; border-top: 2px solid #e2e2e2; box-sizing: border-box; display: flex; align-items: center; padding-left: 14px; padding-bottom: 10px; }
.msg { margin-right: auto; }
.fsep { width: 2px; height: 30px; background: #8f9599; margin: 0 22px 0 16px; }
.gs { display: flex; gap: 7px; margin-right: 25px; font: 500 27px/30px Lato, sans-serif; color: #27333a; }
.gs em { font-style: normal; font-weight: 300; }
</style>
